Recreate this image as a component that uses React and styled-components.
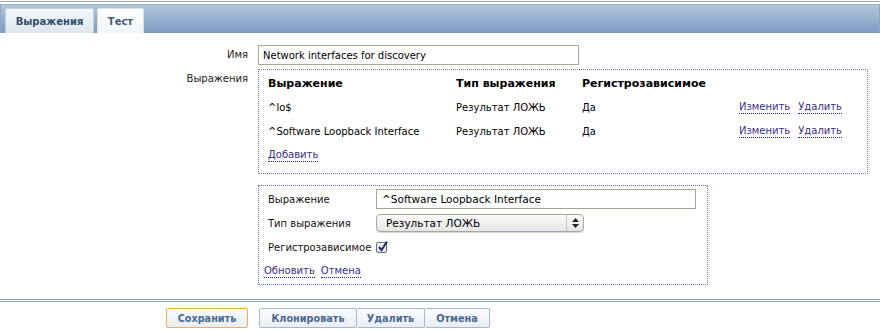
import React from "react";
import styled, { createGlobalStyle } from "styled-components";

const Global = createGlobalStyle`
  html, body { margin: 0; padding: 0; background: #fff; }
  body { font-family: "DejaVu Sans", Verdana, sans-serif; font-size: 10px; color: #111; }
  * { box-sizing: border-box; }
`;

const Page = styled.div`
  width: 880px;
  padding-top: 1px;
`;

const TopRule = styled.div`
  height: 1px;
  background: #9ba7b5;
  margin-bottom: 2px;
`;

const TabBar = styled.div`
  height: 29px;
  display: flex;
  align-items: flex-end;
  gap: 3px;
  padding-left: 4px;
  background: linear-gradient(#b2c6db, #7b9cc1);
  border-left: 1px solid #8ea6c2;
  border-right: 1px solid #8ea6c2;
  border-top: 1px solid #9db3cb;
`;

const Tab = styled.div`
  height: 25px;
  width: ${(p) => p.$w}px;
  display: flex;
  align-items: center;
  justify-content: center;
  font-weight: bold;
  font-size: 10px;
  color: ${(p) => (p.$active ? "#324e6f" : "#3f5c7f")};
  border: 1px solid ${(p) => (p.$active ? "#c3d1e0" : "#d6e0ea")};
  border-bottom: none;
  border-radius: 2px 2px 0 0;
  background: ${(p) =>
    p.$active ? "linear-gradient(#f4f7fa, #dde6ef)" : "linear-gradient(#ffffff, #f1f4f8)"};
`;

const Form = styled.div`
  padding: 12px 0 14px 0;
  display: grid;
  grid-template-columns: 248px auto;
  column-gap: 10px;
  row-gap: 4px;
  align-items: start;
`;

const Label = styled.div`
  text-align: right;
  line-height: 20px;
  color: #222;
`;

const Cell = styled.div`
  margin-top: ${(p) => p.$mt || 0}px;
`;

const TextInput = styled.div`
  width: ${(p) => p.$w}px;
  height: 20px;
  border: 1px solid #a8a698;
  padding-left: ${(p) => p.$pl || 4}px;
  display: flex;
  align-items: center;
  font-size: ${(p) => p.$fs || 10}px;
  color: #000;
  background: #fff;
`;

const DottedBox = styled.div`
  width: ${(p) => p.$w}px;
  border: 1px dotted #6577b3;
  padding: ${(p) => p.$pad};
`;

const ExprGrid = styled.div`
  display: grid;
  grid-template-columns: 188px 126px 157px auto;
  grid-auto-rows: 24px;
  align-items: center;
  color: #000;
`;

const Head = styled.div`
  font-weight: bold;
  font-size: 11px;
  color: #000;
`;

const Actions = styled.div`
  display: flex;
  gap: 8px;
`;

const Link = styled.a`
  color: #3b2e86;
  text-decoration: none;
  border-bottom: 1px dotted #2a1f8f;
  line-height: 12px;
  cursor: pointer;
`;

const LinkRow = styled.div`
  grid-column: 1 / -1;
  display: flex;
  gap: ${(p) => p.$gap || 0}px;
`;

const EditGrid = styled.div`
  display: grid;
  grid-template-columns: 112px auto;
  grid-auto-rows: 24px;
  align-items: center;
  color: #111;
`;

const EditLabel = styled.div`
  padding-left: 4px;
`;

const Select = styled.div`
  width: 208px;
  height: 18px;
  border: 1px solid #a9a79c;
  border-radius: 4px;
  background: linear-gradient(#fbfbfb, #e6e6e6);
  display: flex;
  align-items: stretch;
  font-size: 10.5px;
  color: #000;
  box-shadow: 0 1px 0 #d8d8d8;
`;

const SelectText = styled.div`
  flex: 1;
  display: flex;
  align-items: center;
  padding-left: 9px;
`;

const SelectArrow = styled.div`
  width: 17px;
  border-left: 1px solid #c4c4c4;
  display: flex;
  align-items: center;
  justify-content: center;
`;

const Check = styled.div`
  width: 11px;
  height: 11px;
  border: 1px solid #6d7280;
  border-radius: 2px;
  background: linear-gradient(#ffffff, #d9e2ee);
  position: relative;
`;

const CheckMark = styled.svg`
  position: absolute;
  left: 0px;
  top: -3px;
`;

const Footer = styled.div`
  border-top: 1px solid #8d9db2;
  padding-top: 1px;
`;

const ButtonBar = styled.div`
  border-top: 1px solid #7fa1c6;
  border-bottom: 1px solid #8ba2bc;
  padding: 6px 0 5px 166px;
  display: flex;
  gap: 11px;
`;

const ButtonGroup = styled.div`
  display: flex;
`;

const Button = styled.div`
  height: 20px;
  width: ${(p) => p.$w}px;
  display: flex;
  align-items: center;
  justify-content: center;
  font-weight: bold;
  font-size: 9.7px;
  color: #4a6790;
  background: linear-gradient(#fbfcfd, #e8eef4);
  border: 1px solid ${(p) => (p.$primary ? "#f4ac4d" : "#a6b7cc")};
  border-radius: 2px;
  & + & {
    border-left: none;
  }
`;

export default function App() {
  return (
    <Page>
      <Global />
      <TopRule />
      <TabBar>
        <Tab $active $w={89}>Выражения</Tab>
        <Tab $w={47}>Тест</Tab>
      </TabBar>
      <Form>
        <Label>Имя</Label>
        <Cell>
          <TextInput $w={321} $pl={4}>Network interfaces for discovery</TextInput>
        </Cell>
        <Label>Выражения</Label>
        <Cell>
          <DottedBox $w={610} $pad="1px 9px 6px 9px">
            <ExprGrid>
              <Head>Выражение</Head>
              <Head>Тип выражения</Head>
              <Head>Регистрозависимое</Head>
              <div />
              <div>^lo$</div>
              <div>Результат ЛОЖЬ</div>
              <div>Да</div>
              <Actions>
                <Link>Изменить</Link>
                <Link>Удалить</Link>
              </Actions>
              <div>^Software Loopback Interface</div>
              <div>Результат ЛОЖЬ</div>
              <div>Да</div>
              <Actions>
                <Link>Изменить</Link>
                <Link>Удалить</Link>
              </Actions>
              <LinkRow>
                <Link>Добавить</Link>
              </LinkRow>
            </ExprGrid>
          </DottedBox>
        </Cell>
        <div />
        <Cell $mt={7}>
          <DottedBox $w={450} $pad="1px 12px 1px 5px">
            <EditGrid>
              <EditLabel>Выражение</EditLabel>
              <TextInput $w={320} $pl={5} $fs={10.5}>^Software Loopback Interface</TextInput>
              <EditLabel>Тип выражения</EditLabel>
              <Select>
                <SelectText>Результат ЛОЖЬ</SelectText>
                <SelectArrow>
                  <svg width="7" height="10" viewBox="0 0 7 10">
                    <path d="M3.5 0 L7 4 L0 4 Z" fill="#222" />
                    <path d="M0 6 L7 6 L3.5 10 Z" fill="#222" />
                  </svg>
                </SelectArrow>
              </Select>
              <EditLabel>Регистрозависимое</EditLabel>
              <div>
                <Check>
                  <CheckMark width="13" height="13" viewBox="0 0 13 13">
                    <path d="M2 7 L4.5 10 L10 1.5" fill="none" stroke="#1c2f6e" strokeWidth="2" />
                  </CheckMark>
                </Check>
              </div>
              <LinkRow $gap={6}>
                <Link>Обновить</Link>
                <Link>Отмена</Link>
              </LinkRow>
            </EditGrid>
          </DottedBox>
        </Cell>
      </Form>
      <Footer>
        <ButtonBar>
          <ButtonGroup>
            <Button $primary $w={82}>Сохранить</Button>
          </ButtonGroup>
          <ButtonGroup>
            <Button $w={98}>Клонировать</Button>
            <Button $w={68}>Удалить</Button>
            <Button $w={65}>Отмена</Button>
          </ButtonGroup>
        </ButtonBar>
      </Footer>
    </Page>
  );
}
